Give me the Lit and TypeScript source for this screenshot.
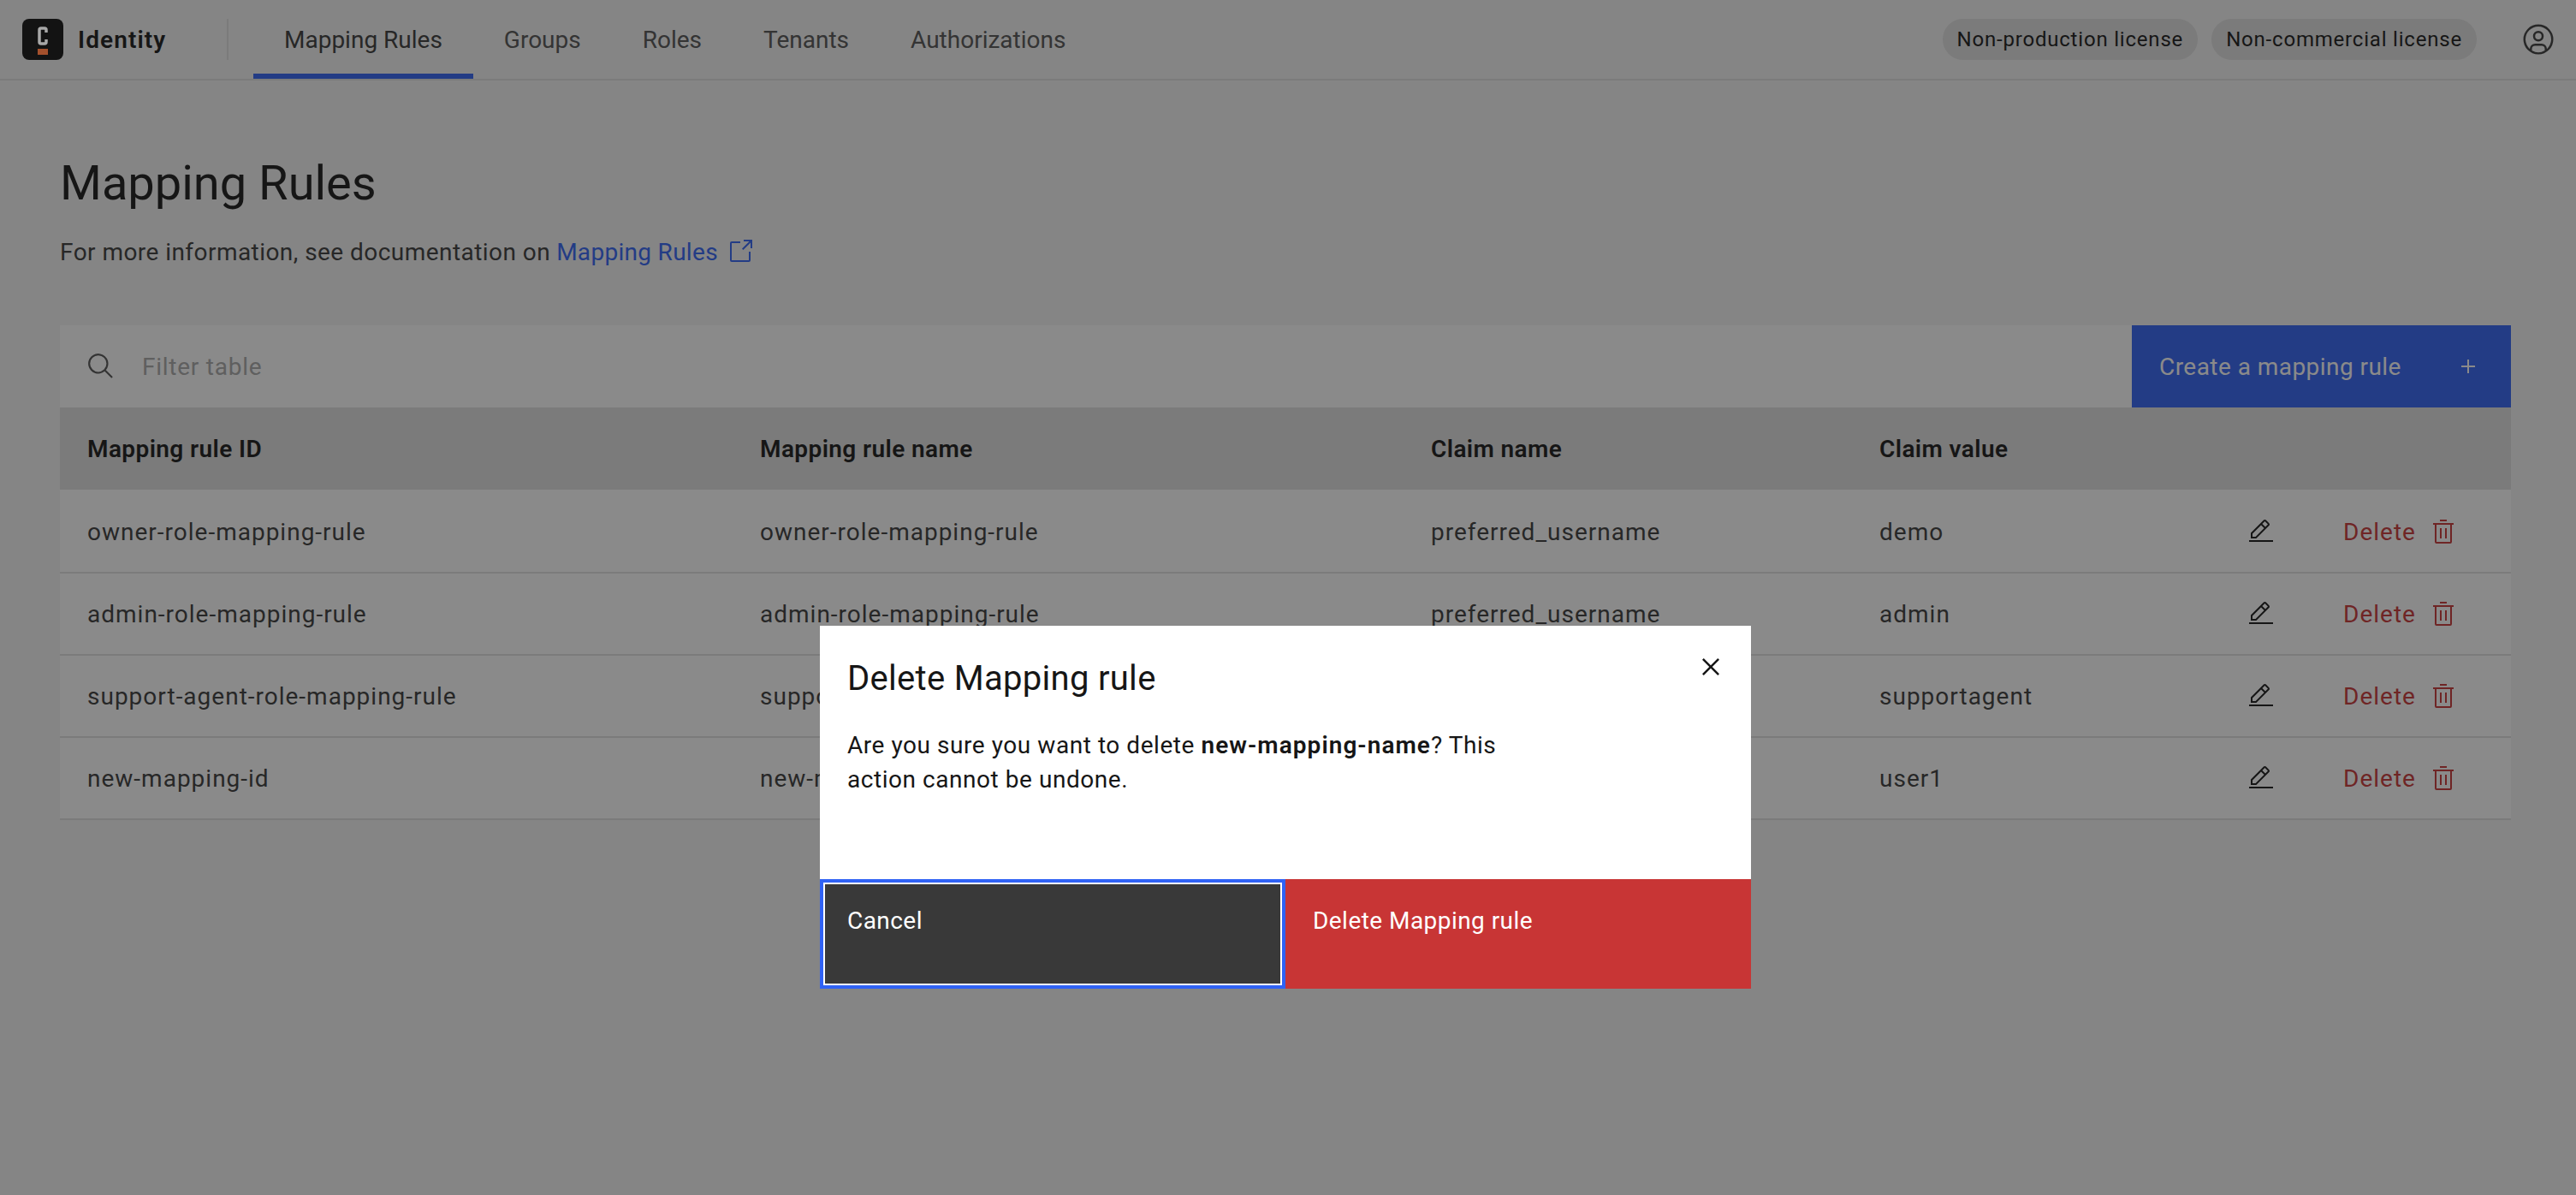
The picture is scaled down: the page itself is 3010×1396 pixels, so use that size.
import { LitElement, html, css, svg } from "lit";
import { customElement } from "lit/decorators.js";

const icon = (size: number, body: unknown, cls = "") =>
  html`<svg class="icon ${cls}" width=${size} height=${size} viewBox="0 0 32 32" fill="currentColor" aria-hidden="true">${body}</svg>`;

const trash = svg`<path d="M12 12H14V24H12zM18 12H20V24H18z"/><path d="M4 6V8H6V28a2 2 0 002 2H24a2 2 0 002-2V8h2V6zM8 28V8H24V28zM12 2H20V4H12z"/>`;
const edit = svg`<path d="M2 26H30V28H2zM25.4 9c.8-.8.8-2 0-2.8l-3.6-3.6c-.8-.8-2-.8-2.8 0l-15 15V24h6.4L25.4 9zM20.4 4L24 7.6l-3 3L17.4 7 20.4 4zM6 22v-3.6l10-10 3.6 3.6-10 10H6z"/>`;
const launch = svg`<path d="M26,28H6a2.0027,2.0027,0,0,1-2-2V6A2.0027,2.0027,0,0,1,6,4H16V6H6V26H26V16h2V26A2.0027,2.0027,0,0,1,26,28Z"/><polygon points="20 2 20 4 26.586 4 18 12.586 19.414 14 28 5.414 28 12 30 12 30 2 20 2"/>`;
const search = svg`<path d="M29,27.5859l-7.5521-7.5521a11.0177,11.0177,0,1,0-1.4141,1.4141L27.5859,29ZM4,13a9,9,0,1,1,9,9A9.01,9.01,0,0,1,4,13Z"/>`;
const add = svg`<polygon points="17 15 17 8 15 8 15 15 8 15 8 17 15 17 15 24 17 24 17 17 24 17 24 15 17 15"/>`;
const close = svg`<polygon points="17.4141 16 24 9.4141 22.5859 8 16 14.5859 9.4143 8 8 9.4141 14.5859 16 8 22.5859 9.4143 24 16 17.4141 22.5859 24 24 22.5859 17.4141 16"/>`;
const user = svg`<path d="M16,8a5,5,0,1,0,5,5A5,5,0,0,0,16,8Zm0,8a3,3,0,1,1,3-3A3.0034,3.0034,0,0,1,16,16Z"/><path d="M16,2A14,14,0,1,0,30,16,14.0158,14.0158,0,0,0,16,2ZM10,26.3765V25a3.0033,3.0033,0,0,1,3-3h6a3.0033,3.0033,0,0,1,3,3v1.3765a11.8989,11.8989,0,0,1-12,0Zm13.9925-1.4507A5.0016,5.0016,0,0,0,19,20H13a5.0016,5.0016,0,0,0-4.9925,4.9258,12,12,0,1,1,15.985,0Z"/>`;

const rows = [
  ["owner-role-mapping-rule", "owner-role-mapping-rule", "preferred_username", "demo"],
  ["admin-role-mapping-rule", "admin-role-mapping-rule", "preferred_username", "admin"],
  ["support-agent-role-mapping-rule", "support-agent-role-mapping-rule", "preferred_username", "supportagent"],
  ["new-mapping-id", "new-mapping-name", "preferred_username", "user1"],
];

@customElement("app-root")
export class AppRoot extends LitElement {
  static styles = css`
    :host {
      display: block;
      position: relative;
      min-height: 1396px;
      background: #f4f4f4;
      color: #161616;
      font-family: Roboto, "Liberation Sans", sans-serif;
      font-size: 28px;
      letter-spacing: 0.9px;
    }
    .icon { display: block; flex: none; }
    header {
      height: 94px;
      box-sizing: border-box;
      border-bottom: 2px solid #e0e0e0;
      display: flex;
      align-items: stretch;
      background: #f4f4f4;
    }
    .brand { display: flex; align-items: center; padding-left: 26px; width: 265px; box-sizing: border-box; gap: 17px; }
    .logo { width: 48px; height: 48px; flex: none; position: relative; z-index: 2; }
    .brand-name { font-weight: 600; letter-spacing: 1.1px; }
    .divider-wrap { display: flex; align-items: center; }
    .divider { width: 2px; height: 48px; background: #e0e0e0; }
    nav { display: flex; margin-left: 29px; }
    .tab { display: flex; align-items: center; padding: 0 36px; color: #525252; box-sizing: border-box; height: 92px; border-bottom: 6px solid transparent; padding-top: 6px; letter-spacing: 0; }
    .tab.active { border-bottom-color: #3062f5; color: #393939; }
    .head-right { margin-left: auto; display: flex; align-items: center; padding-right: 24px; }
    .tag { height: 48px; border-radius: 24px; background: #e0e0e0; padding: 0 17px; display: flex; align-items: center; font-size: 24px; letter-spacing: 0.8px; }
    .tag + .tag { margin-left: 16px; }
    .user { margin-left: 52px; color: #393939; }
    main { padding: 0 76px 0 70px; }
    h1 { margin: 0; font-weight: 400; font-size: 56px; line-height: 72px; padding-top: 84px; letter-spacing: 0; }
    .sub { display: flex; align-items: center; height: 40px; margin-top: 24px; color: #393939; letter-spacing: 0.45px; }
    .sub a { color: #3062f5; margin-left: 7px; text-decoration: none; letter-spacing: 0.3px; }
    .sub .icon { color: #3062f5; margin-left: 10px; }
    .toolbar { margin-top: 66px; height: 96px; display: flex; background: #fff; }
    .search { flex: 1; display: flex; align-items: center; padding-left: 31px; color: #525252; }
    .placeholder { margin-left: 31px; color: #a8a8a8; letter-spacing: 0.75px; }
    .create { width: 443px; box-sizing: border-box; background: #3062f5; color: #fff; display: flex; align-items: center; justify-content: space-between; padding: 0 34px 0 32px; letter-spacing: 0.45px; }
    .table-body { background: #fff; padding-top: 2px; }
    .grid-row { display: grid; grid-template-columns: 786px 784px 524px 1fr; height: 96px; box-sizing: border-box; align-items: center; background: #fff; border-bottom: 2px solid #e0e0e0; color: #393939; letter-spacing: 1px; }
    .grid-row.head { background: #e0e0e0; font-weight: 600; color: #161616; border-bottom: 0; letter-spacing: 0.4px; }
    .cell { padding-left: 32px; }
    .actions { display: flex; align-items: center; height: 100%; }
    .claim { width: 462px; flex: none; box-sizing: border-box; padding-left: 32px; }
    .edit { color: #161616; }
    .del { margin-left: 80px; color: #c83535; display: flex; align-items: center; gap: 16px; }
    .overlay {
      position: absolute;
      inset: 0;
      background: rgba(22, 22, 22, 0.5);
      display: flex;
      justify-content: center;
      align-items: flex-start;
      padding: 731px 6px 0 0;
      box-sizing: border-box;
    }
    .modal { width: 1088px; height: 424px; background: #fff; display: flex; flex-direction: column; position: relative; }
    .modal-head { font-size: 40px; line-height: 56px; padding: 34px 32px 0; letter-spacing: 0.3px; }
    .close { position: absolute; top: 28px; right: 27px; color: #161616; }
    .modal-body { flex: 1; padding: 30px 32px 0; line-height: 40px; width: 840px; box-sizing: border-box; letter-spacing: 0.55px; }
    .modal-body b { font-weight: 600; letter-spacing: 1.05px; }
    .buttons { display: flex; height: 128px; letter-spacing: 0.45px; }
    .btn { width: 50%; box-sizing: border-box; padding: 33px 32px 31px; color: #fff; line-height: 32px; }
    .cancel { background: #393939; border: 4px solid #3062f5; box-shadow: inset 0 0 0 2px #fff; padding: 29px 28px 27px; }
    .danger { background: #c83535; }
  `;

  render() {
    return html`
      <header>
        <div class="brand">
          <svg class="logo" viewBox="0 0 48 48" aria-hidden="true">
            <rect width="48" height="48" rx="8" fill="#131313"/>
            <path d="M28 16 V13 a2 2 0 0 0 -2 -2 H22 a2 2 0 0 0 -2 2 V27 a2 2 0 0 0 2 2 H26 a2 2 0 0 0 2 -2 V24" fill="none" stroke="#a8a8a8" stroke-width="3.5"/>
            <rect x="18" y="35" width="12" height="7" fill="#a4502c"/>
          </svg>
          <span class="brand-name">Identity</span>
        </div>
        <div class="divider-wrap"><div class="divider"></div></div>
        <nav>
          ${["Mapping Rules", "Groups", "Roles", "Tenants", "Authorizations"].map(
            (t, i) => html`<div class="tab ${i === 0 ? "active" : ""}">${t}</div>`
          )}
        </nav>
        <div class="head-right">
          <span class="tag">Non-production license</span>
          <span class="tag">Non-commercial license</span>
          ${icon(40, user, "user")}
        </div>
      </header>
      <main>
        <h1>Mapping Rules</h1>
        <div class="sub">For more information, see documentation on <a>Mapping Rules</a>${icon(32, launch)}</div>
        <div class="toolbar">
          <div class="search">${icon(34, search)}<span class="placeholder">Filter table</span></div>
          <div class="create"><span>Create a mapping rule</span>${icon(32, add)}</div>
        </div>
        <div class="grid-row head">
          <div class="cell">Mapping rule ID</div>
          <div class="cell">Mapping rule name</div>
          <div class="cell">Claim name</div>
          <div class="cell">Claim value</div>
        </div>
        <div class="table-body">
          ${rows.map(
            (r) => html`<div class="grid-row">
              <div class="cell">${r[0]}</div>
              <div class="cell">${r[1]}</div>
              <div class="cell">${r[2]}</div>
              <div class="actions">
                <div class="claim">${r[3]}</div>
                <span class="edit">${icon(32, edit)}</span>
                <span class="del">Delete ${icon(32, trash)}</span>
              </div>
            </div>`
          )}
        </div>
      </main>
      <div class="overlay">
        <div class="modal">
          <div class="modal-head">Delete Mapping rule</div>
          <span class="close">${icon(40, close)}</span>
          <div class="modal-body">Are you sure you want to delete <b>new-mapping-name</b>? This action cannot be undone.</div>
          <div class="buttons">
            <div class="btn cancel">Cancel</div>
            <div class="btn danger">Delete Mapping rule</div>
          </div>
        </div>
      </div>
    `;
  }
}
